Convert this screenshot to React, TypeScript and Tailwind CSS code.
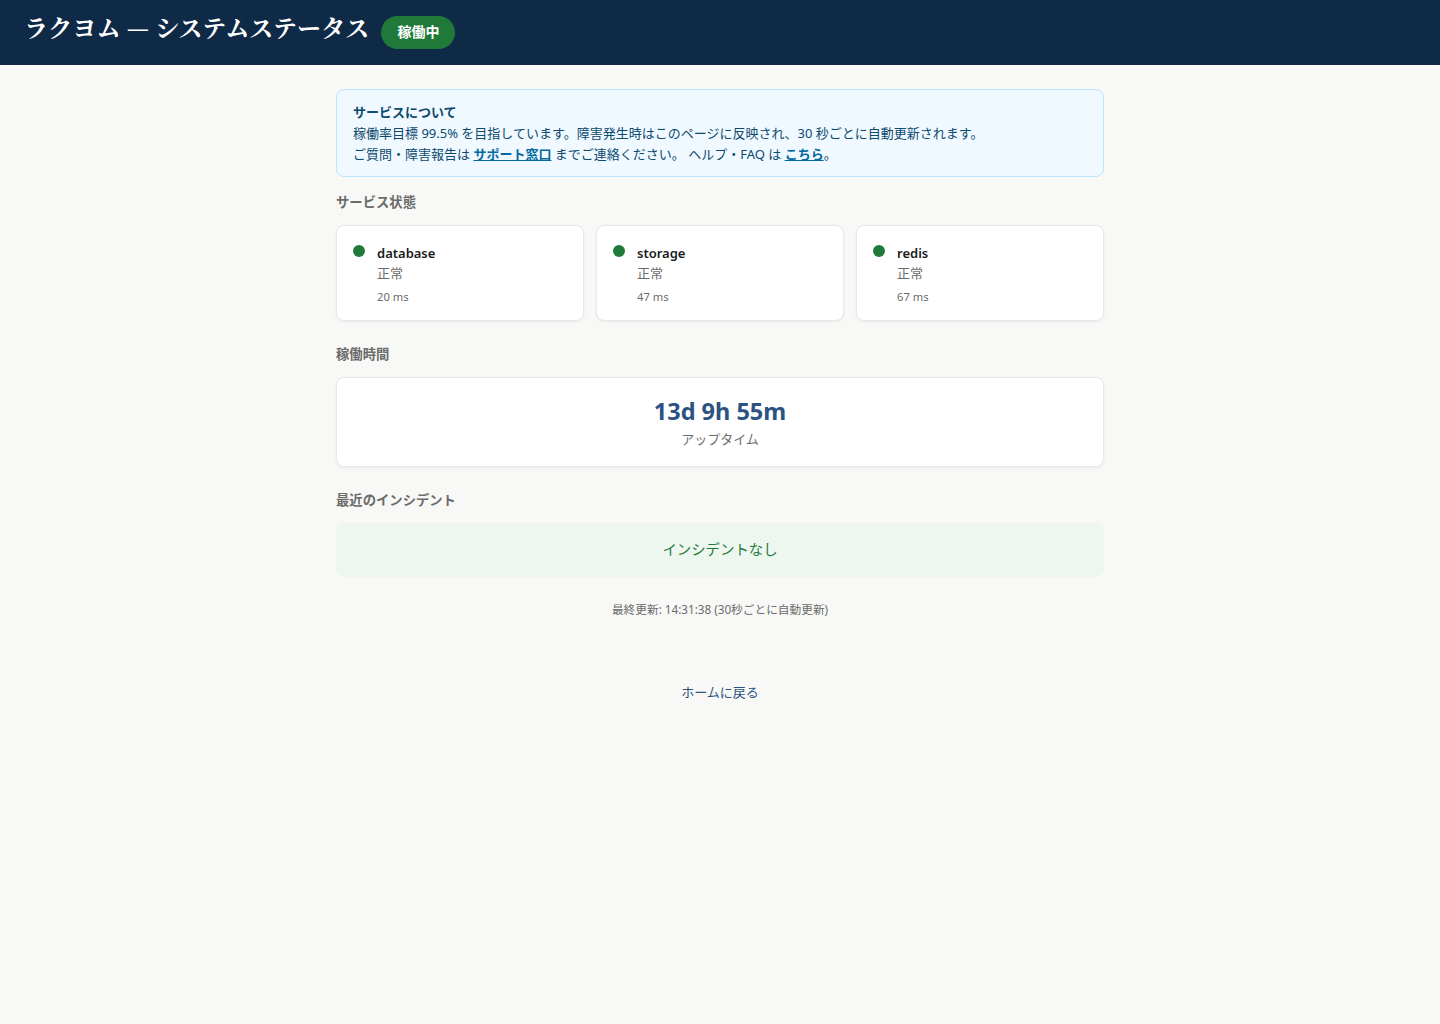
const services = [
  { name: 'database', ms: '20 ms' },
  { name: 'storage', ms: '47 ms' },
  { name: 'redis', ms: '67 ms' },
]

const SectionTitle = ({ children }: { children: string }) => (
  <h2 className="text-[13.33px] leading-[20px] font-bold text-[#6b6b6b]">{children}</h2>
)

const App = () => {
  return (
    <div className="min-h-[1024px] bg-[#f8f8f6] font-['Noto_Sans','Noto_Sans_CJK_JP',sans-serif]">
      {/* Header */}
      <header className="h-[65px] bg-[#0f2a47] pl-6 flex items-start pt-[15px] gap-3">
        <h1 className="text-[24px] leading-[24px] tracking-[0.13px] font-bold text-white font-['Noto_Serif_CJK_JP','Liberation_Serif',serif]">
          ラクヨム — システムステータス
        </h1>
        <span className="h-[33px] mt-px px-4 pb-[2px] rounded-full bg-[#1f7a3a] text-white text-[14px] font-bold flex items-center">
          稼働中
        </span>
      </header>

      <main className="w-[768px] mx-auto pt-6">
        {/* Info */}
        <div className="h-[88px] rounded-lg border border-[#bae6fd] bg-[#f0f9ff] px-4 py-[12px] text-[13px] leading-[21px] text-[#0c4a6e]">
          <div className="font-bold">サービスについて</div>
          <div>稼働率目標 99.5% を目指しています。障害発生時はこのページに反映され、30 秒ごとに自動更新されます。</div>
          <div>
            ご質問・障害報告は <a href="#" className="font-bold underline text-[#0369a1]">サポート窓口</a> までご連絡ください。 ヘルプ・FAQ は <a href="#" className="font-bold underline text-[#0369a1]">こちら</a>。
          </div>
        </div>

        {/* Services */}
        <div className="mt-[15px]">
          <SectionTitle>サービス状態</SectionTitle>
        </div>
        <div className="mt-[13px] grid grid-cols-3 gap-3">
          {services.map((s) => (
            <div key={s.name} className="h-[96px] rounded-lg border border-[#e8e8e8] bg-white shadow-[0_1px_3px_rgba(0,0,0,0.06)] px-4 pt-[16px] flex gap-3">
              <span className="w-3 h-3 rounded-full bg-[#1f7a3a] mt-[3px] shrink-0" />
              <div>
                <div className="text-[13px] leading-[22px] font-semibold text-[#1a1a1a]">{s.name}</div>
                <div className="text-[13px] leading-[18px] text-[#6b6b6b]">正常</div>
                <div className="mt-[6px] text-[11.2px] leading-[18px] text-[#6b6b6b]">{s.ms}</div>
              </div>
            </div>
          ))}
        </div>

        {/* Uptime */}
        <div className="mt-[23px]">
          <SectionTitle>稼働時間</SectionTitle>
        </div>
        <div className="mt-[13px] h-[90px] rounded-lg border border-[#e8e8e8] bg-white shadow-[0_1px_3px_rgba(0,0,0,0.06)] flex flex-col items-center pt-[17px]">
          <div className="text-[23.5px] leading-[32px] font-bold text-[#2c5282]">13d 9h 55m</div>
          <div className="text-[13px] leading-[22px] mt-[1px] text-[#6b6b6b]">アップタイム</div>
        </div>

        {/* Incidents */}
        <div className="mt-[23px]">
          <SectionTitle>最近のインシデント</SectionTitle>
        </div>
        <div className="mt-[13px] h-[54px] rounded-lg bg-[#edf7ef] flex items-center justify-center text-[14.4px] text-[#1f7a3a]">
          インシデントなし
        </div>

        <p className="mt-[22px] text-center text-[11.7px] leading-[20px] text-[#6b6b6b]">
          最終更新: 14:31:38 (30秒ごとに自動更新)
        </p>
        <div className="mt-[63px] text-center text-[13px] leading-[20px]">
          <a href="#" className="text-[#2c5282]">ホームに戻る</a>
        </div>
      </main>
    </div>
  )
}

export default App
